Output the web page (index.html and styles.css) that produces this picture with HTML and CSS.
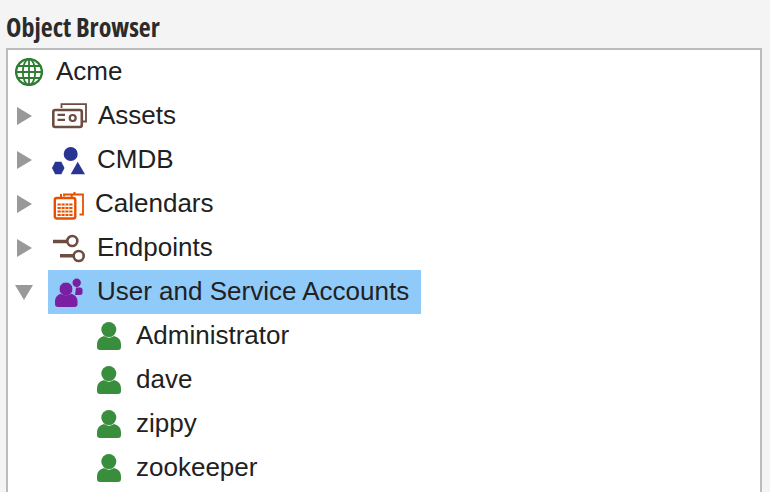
FILE: index.html
```html
<!DOCTYPE html>
<html lang="en">
<head>
    <meta charset="UTF-8">
    <title>Object Browser</title>
    <link rel="stylesheet" href="styles.css">
</head>
<body>
    <div class="title">Object Browser</div>
    <div class="tree">
        <div class="row root">
            <div class="node">
                <svg class="icon icon-globe" width="28" height="28" viewBox="0 0 28 28" fill="none" stroke="#2e7d32" stroke-width="1.8">
                    <circle cx="14" cy="14" r="12.9" stroke-width="2.4"/>
                    <ellipse cx="14" cy="14" rx="6.2" ry="12.9"/>
                    <path d="M14 1V27M1 14H27M3 8H25M3 20H25"/>
                </svg>
                <span class="label">Acme</span>
            </div>
        </div>
        <div class="row">
            <span class="twist"></span>
            <div class="node">
                <svg class="icon icon-assets" width="36" height="26" viewBox="0 0 36 26" fill="none" stroke="#6d4c41" stroke-width="2.2">
                    <rect x="1.3" y="7" width="28.5" height="17" rx="2" stroke-width="2.6"/>
                    <path d="M9.5 5V1.2H34V18.5H31" stroke-width="1.8"/>
                    <path d="M5.5 11.8H13M5.5 16.8H13"/>
                    <circle cx="20.7" cy="15" r="3"/>
                </svg>
                <span class="label">Assets</span>
            </div>
        </div>
        <div class="row">
            <span class="twist"></span>
            <div class="node">
                <svg class="icon icon-cmdb" width="34" height="28" viewBox="0 0 34 28" fill="#283593">
                    <circle cx="18.7" cy="7" r="7"/>
                    <path d="M0 21L3.2 14.8H9.3L12.5 21L9.3 27.2H3.2Z"/>
                    <path d="M18.7 27.2L25.7 14.8L33 27.2Z"/>
                </svg>
                <span class="label">CMDB</span>
            </div>
        </div>
        <div class="row">
            <span class="twist"></span>
            <div class="node">
                <svg class="icon icon-calendars" width="32" height="29" viewBox="0 0 32 29" fill="none" stroke="#e65100" stroke-width="2">
                    <rect x="1.8" y="7" width="20.5" height="20.5" rx="2" stroke-width="2.4"/>
                    <path d="M11 5.5V3.5H30V23.5H26.5" stroke-width="1.8"/>
                    <path d="M8 3V8M18.7 3V8M21.5 1V4" stroke-width="2"/>
                    <path d="M4.5 13.5H19.5M4.5 17H19.5M4.5 20.5H19.5M4.5 24H19.5" stroke-width="2.2"/>
                    <path d="M8.2 12V25.5M12 12V25.5M15.8 12V25.5" stroke="#fbe3d3" stroke-width="1"/>
                </svg>
                <span class="label">Calendars</span>
            </div>
        </div>
        <div class="row">
            <span class="twist"></span>
            <div class="node">
                <svg class="icon icon-endpoints" width="33" height="29" viewBox="0 0 33 29" fill="none" stroke="#6d4c41">
                    <path d="M0 7.5H14M7 21.7H21" stroke-width="3.6"/>
                    <circle cx="19.3" cy="7" r="5" stroke-width="2.6"/>
                    <circle cx="25.7" cy="22" r="5" stroke-width="2.6"/>
                </svg>
                <span class="label">Endpoints</span>
            </div>
        </div>
        <div class="row">
            <span class="twist open"></span>
            <div class="node selected">
                <svg class="icon icon-group" width="28" height="29" viewBox="0 0 28 29" fill="#7b1fa2">
                    <circle cx="21.7" cy="4.7" r="4.2"/>
                    <path d="M21 9.5H25Q27.5 9.5 27.5 12V15Q27.5 17 25 17H20Z"/>
                    <circle cx="11" cy="11" r="7" stroke="#90caf9"/>
                    <path d="M3 29Q0 29 0 26V23Q0 18 5.5 15.8Q11 18.8 16.5 15.8Q22.5 18 22.5 23V26Q22.5 29 19.5 29Z"/>
                </svg>
                <span class="label">User and Service Accounts</span>
            </div>
        </div>
        <div class="row child">
            <div class="node">
                <svg class="icon icon-user" width="24" height="28" viewBox="0 0 24 28" fill="#388e3c">
                    <circle cx="11.8" cy="7.6" r="7.5"/>
                    <path d="M3 28Q0 28 0 25V22Q0 16 7 14Q12 17.5 17 14Q24 16 24 22V25Q24 28 21 28Z"/>
                </svg>
                <span class="label">Administrator</span>
            </div>
        </div>
        <div class="row child">
            <div class="node">
                <svg class="icon icon-user" width="24" height="28" viewBox="0 0 24 28" fill="#388e3c">
                    <circle cx="11.8" cy="7.6" r="7.5"/>
                    <path d="M3 28Q0 28 0 25V22Q0 16 7 14Q12 17.5 17 14Q24 16 24 22V25Q24 28 21 28Z"/>
                </svg>
                <span class="label">dave</span>
            </div>
        </div>
        <div class="row child">
            <div class="node">
                <svg class="icon icon-user" width="24" height="28" viewBox="0 0 24 28" fill="#388e3c">
                    <circle cx="11.8" cy="7.6" r="7.5"/>
                    <path d="M3 28Q0 28 0 25V22Q0 16 7 14Q12 17.5 17 14Q24 16 24 22V25Q24 28 21 28Z"/>
                </svg>
                <span class="label">zippy</span>
            </div>
        </div>
        <div class="row child">
            <div class="node">
                <svg class="icon icon-user" width="24" height="28" viewBox="0 0 24 28" fill="#388e3c">
                    <circle cx="11.8" cy="7.6" r="7.5"/>
                    <path d="M3 28Q0 28 0 25V22Q0 16 7 14Q12 17.5 17 14Q24 16 24 22V25Q24 28 21 28Z"/>
                </svg>
                <span class="label">zookeeper</span>
            </div>
        </div>
    </div>
</body>
</html>
```

FILE: styles.css
```css
html, body {
    height: 492px;
    overflow: hidden;
}
body {
    margin: 0;
    padding: 0 8px 0 6px;
    display: flex;
    flex-direction: column;
    background-color: #f4f4f4;
    font-family: "Liberation Sans", Arial, sans-serif;
    color: #212121;
}
.title {
    height: 48px;
    line-height: 54px;
    font-family: "Open Sans", sans-serif;
    font-size: 26px;
    font-weight: 700;
    font-stretch: condensed;
    color: #2b2b2b;
}
.tree {
    flex: 1;
    background-color: white;
    border: 2px solid #bbb;
    border-bottom: none;
}
.row {
    display: flex;
    align-items: stretch;
    height: 44px;
}
.row.root {
    padding-left: 7px;
}
.row.child {
    padding-left: 89px;
}
.twist {
    width: 40px;
    flex-shrink: 0;
    position: relative;
}
.twist:before {
    content: "";
    position: absolute;
    left: 9px;
    top: 13px;
    border-style: solid;
    border-width: 9px 0 9px 15px;
    border-color: transparent transparent transparent #999;
}
.twist.open:before {
    left: 7px;
    top: 15px;
    border-width: 15px 9px 0 9px;
    border-color: #999 transparent transparent transparent;
}
.node {
    display: flex;
    align-items: center;
    padding: 0 12px 0 4px;
}
.row.root .node, .row.child .node {
    padding-left: 0;
}
.node.selected {
    background-color: #90caf9;
    padding-left: 7px;
}
.label {
    font-size: 26px;
    line-height: 42px;
    margin-bottom: 2px;
}
.icon-globe { margin-right: 13px; }
.icon-assets { margin-right: 10px; }
.icon-cmdb { margin: 2px 11px 0 0; }
.icon-calendars { margin: 2px 10px 0 1px; }
.icon-endpoints { margin: 0 11px 0 1px; }
.icon-group { margin: 0 14px 0 0; }
.icon-user { margin: 0 15px 0 0; }
```
